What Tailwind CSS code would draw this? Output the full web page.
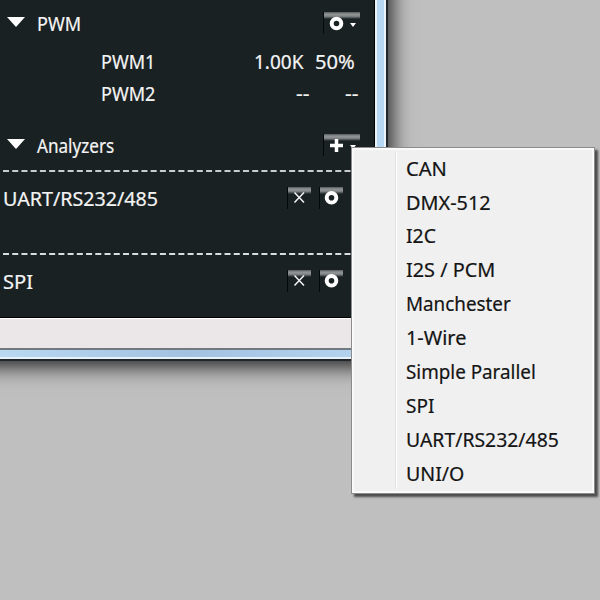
<!DOCTYPE html>
<html lang="en">
<head>
<meta charset="utf-8">
<title>Analyzers</title>
<script src="https://cdn.jsdelivr.net/npm/@tailwindcss/browser@4"></script>
</head>
<body class="relative flow-root h-[600px] w-[600px] overflow-hidden bg-[#bfbfbf] text-[19px] whitespace-nowrap font-['Noto_Sans',sans-serif] [-webkit-text-stroke-width:0.2px]">
<svg class="absolute h-0 w-0">
  <defs>
    <linearGradient id="shine" x1="0" y1="0" x2="0" y2="1"><stop offset="0" stop-color="#555a5a"/><stop offset=".3" stop-color="#909494"/><stop offset=".6" stop-color="#85898a"/><stop offset="1" stop-color="#1a2123"/></linearGradient>
    <symbol id="gear" viewBox="0 0 24 24"><path d="M.5 1V23" stroke="#050909"/><path d="M1 1H24V8H1Z" fill="url(#shine)"/><circle cx="12.500" cy="11.700" r="4.800" fill="#1a2123" stroke="#fff" stroke-width="4"/></symbol>
    <symbol id="close" viewBox="0 0 24 24"><path d="M.5 1V23" stroke="#050909"/><path d="M1 1H24V8H1Z" fill="url(#shine)"/><path d="M7.500 6.500L17 16.500M17 6.500L7.500 16.500" fill="none" stroke="#f4f4f4" stroke-width="1.500"/></symbol>
  </defs>
</svg>
<main class="-mt-12 -ml-12 flex h-[409px] w-[436px] flex-col pt-12 pl-12 shadow-[0_2px_20px_3px_rgba(0,0,0,0.85)]">
  <div class="flex h-[361px] border-r-2 border-b-2 border-[#20262a]">
    <div class="flex h-[359px] w-[375px] flex-col">
      <section class="flex h-[318px] flex-col border-r border-b border-black bg-[#1a2123] text-[#f4f4f4]">
        <div class="flex h-12 items-center pl-[7px]">
          <svg class="mb-1 h-[11px] w-[18px]" viewBox="0 0 18 11"><path d="M0 0H18L9 10Z" fill="#fff"/></svg>
          <span class="mt-px ml-[12px] w-[286px] origin-left scale-x-[.95]">PWM</span>
          <svg class="-mt-[2px] h-6 w-[38px]" viewBox="0 0 38 24"><path d="M.5 1V23" stroke="#050909"/><path d="M1 1H37V8H1Z" fill="url(#shine)"/><circle cx="13.500" cy="12.500" r="4.800" fill="#1a2123" stroke="#fff" stroke-width="4"/><path d="M27 12H33L30 16Z" fill="#fff"/></svg>
        </div>
        <div class="flex h-[27px] items-center pt-[2px] pl-[101px]">
          <span class="w-[153px] origin-left scale-x-[.95]">PWM1</span>
          <span class="w-[61px] origin-left">1.00K</span>
          <span class="origin-left scale-x-[1.06]">50%</span>
        </div>
        <div class="flex h-[38px] items-center pt-px pl-[101px]">
          <span class="w-[195px] origin-left scale-x-[.95]">PWM2</span>
          <span class="w-[49px] origin-left scale-x-110">--</span>
          <span class="origin-left scale-x-110">--</span>
        </div>
        <div class="flex h-[56px] items-end pb-[11px] pl-[7px]">
          <svg class="mb-[8px] h-[11px] w-[18px]" viewBox="0 0 18 11"><path d="M0 0H18L9 10Z" fill="#fff"/></svg>
          <span class="ml-[12px] w-[286px] origin-left scale-x-[.9] leading-6">Analyzers</span>
          <svg class="mb-px h-6 w-[38px]" viewBox="0 0 38 24"><path d="M.5 1V23" stroke="#050909"/><path d="M1 1H37V8H1Z" fill="url(#shine)"/><path d="M7 12.500H20M13.500 6V19" stroke="#fff" stroke-width="3.500"/><path d="M27 12H33L30 16Z" fill="#fff"/></svg>
        </div>
        <svg class="h-[4px] w-[374px]" viewBox="0 0 374 4"><path d="M3 2H374" stroke="#c8cccc" stroke-width="2" stroke-dasharray="6 3.230"/></svg>
        <div class="flex h-[79px] pt-[14px] pl-[2.5px]">
          <span class="w-[284px] origin-left scale-x-[1.035] leading-6">UART/RS232/485</span>
          <svg class="-mt-px h-6 w-6"><use href="#close"/></svg>
          <svg class="-mt-px ml-2 h-6 w-6"><use href="#gear"/></svg>
        </div>
        <svg class="h-[4px] w-[374px]" viewBox="0 0 374 4"><path d="M3 2H374" stroke="#d9dddd" stroke-width="2" stroke-dasharray="6 3.230"/></svg>
        <div class="flex pt-[14px] pl-[2.5px]">
          <span class="w-[284px] origin-left scale-x-[1.06] leading-6">SPI</span>
          <svg class="-mt-px h-6 w-6"><use href="#close"/></svg>
          <svg class="-mt-px ml-2 h-6 w-6"><use href="#gear"/></svg>
        </div>
      </section>
      <div class="h-[30px] border-t border-white bg-[#ebe7e8]"></div>
      <div class="h-[2px] bg-[#70797e]"></div>
      <div class="h-[9px] border-b-2 border-[#e7f1fa] bg-linear-to-r from-[#b9d8f1] via-[#a3c2e2] to-[#b4d4f0]"></div>
    </div>
    <div class="w-[11px] border-x-2 border-[#eaf3fa] bg-[#b7d8f5]"></div>
  </div>
</main>
<nav class="absolute top-[147px] left-[351px] h-[347px] w-[244px] border border-[#8c8c8c] bg-[#f0f0f0] pt-[4px] pl-[54px] text-[#141414] shadow-[inset_0_0_0_2px_#fafafa,3px_3px_2px_rgba(0,0,0,0.6)]">
  <div class="absolute top-[4px] left-[43px] h-[337px] w-[2px] border-l border-[#e0e3e3] bg-white"></div>
  <ul class="grid h-[339px] grid-rows-10 items-center">
    <li class="origin-left scale-x-[1.06]">CAN</li>
    <li class="origin-left scale-x-[1.045]">DMX-512</li>
    <li class="origin-left scale-x-[1.02]">I2C</li>
    <li class="origin-left scale-x-[1.045]">I2S / PCM</li>
    <li class="origin-left scale-x-[.99]">Manchester</li>
    <li class="origin-left scale-x-[1.045]">1-Wire</li>
    <li class="origin-left scale-x-[.99]">Simple Parallel</li>
    <li class="origin-left">SPI</li>
    <li class="origin-left scale-x-[1.02]">UART/RS232/485</li>
    <li class="origin-left scale-x-[1.03]">UNI/O</li>
  </ul>
</nav>
</body>
</html>
